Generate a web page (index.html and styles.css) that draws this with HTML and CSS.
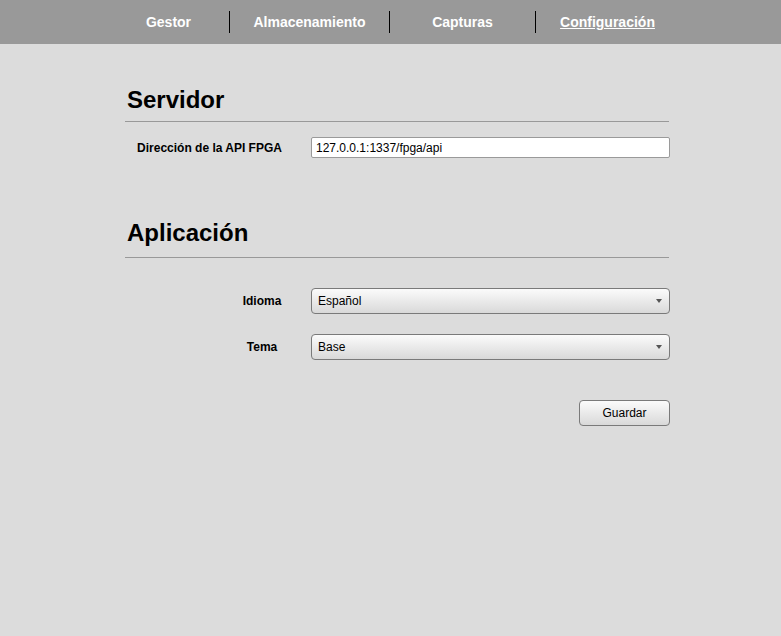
FILE: index.html
```html
<!DOCTYPE html>
<html lang="es">
<head>
<meta charset="utf-8">
<title>Configuración</title>
<link rel="stylesheet" href="styles.css">
</head>
<body>
<nav class="topbar">
  <ul class="menu">
    <li class="menu-item w1"><a href="#">Gestor</a></li>
    <li class="menu-item w2"><a href="#">Almacenamiento</a></li>
    <li class="menu-item w3"><a href="#">Capturas</a></li>
    <li class="menu-item w4 last"><a href="#" class="active">Configuración</a></li>
  </ul>
</nav>
<main class="content">
  <section class="section">
    <h2 class="section-title">Servidor</h2>
    <div class="row row-api">
      <label class="label label-api" for="api">Dirección de la API FPGA</label>
      <input id="api" class="text-input" type="text" value="127.0.0.1:1337/fpga/api">
    </div>
  </section>
  <section class="section section-app">
    <h2 class="section-title">Aplicación</h2>
    <div class="row row-first">
      <label class="label label-app" for="lang">Idioma</label>
      <div class="select-wrap">
        <select id="lang" class="select"><option>Español</option></select>
      </div>
    </div>
    <div class="row row-next">
      <label class="label label-app" for="theme">Tema</label>
      <div class="select-wrap">
        <select id="theme" class="select"><option>Base</option></select>
      </div>
    </div>
    <div class="actions">
      <button class="btn" type="button">Guardar</button>
    </div>
  </section>
</main>
</body>
</html>
```
FILE: styles.css
```css
html, body {
  margin: 0;
  padding: 0;
}
body {
  background: #dcdcdc;
  font-family: "Liberation Sans", Arial, sans-serif;
  color: #000;
  min-height: 636px;
}
.topbar {
  background: #999999;
  height: 44px;
}
.menu {
  list-style: none;
  margin: 0 0 0 108px;
  padding: 11px 0 0 0;
  display: flex;
}
.menu-item {
  height: 22px;
  border-right: 1px solid #000;
  display: flex;
  align-items: center;
  justify-content: center;
  font-size: 14px;
  font-weight: bold;
}
.menu-item.last { border-right: none; }
.w1 { width: 121px; }
.w2 { width: 159px; }
.w3 { width: 145px; }
.w4 { width: 143px; }
.menu-item a {
  color: #fff;
  text-decoration: none;
}
.menu-item a.active { text-decoration: underline; }
.content {
  margin-left: 125px;
  width: 545px;
  padding-top: 42px;
}
.section-title {
  margin: 0;
  padding: 0 0 7px 2px;
  font-size: 24px;
  font-weight: bold;
  line-height: 28px;
  border-bottom: 1px solid #999;
  width: 542px;
}
.section-app .section-title { margin-top: 61px; padding-bottom: 10px; }
.row {
  display: flex;
  align-items: center;
}
.row-api { margin-top: 15px; }
.row-first { margin-top: 30px; }
.row-next { margin-top: 20px; }
.label {
  font-size: 12px;
  font-weight: bold;
  text-align: center;
}
.label-api { width: 169px; margin-right: 17px; }
.label-app { width: 64px; margin-left: 105px; margin-right: 17px; }
.text-input {
  box-sizing: border-box;
  width: 359px;
  height: 21px;
  margin: 0;
  padding: 0 4px;
  border: 1px solid #9a9a9a;
  border-radius: 2px;
  background: #fff;
  font-family: "Liberation Sans", Arial, sans-serif;
  font-size: 12px;
  color: #000;
}
.select-wrap {
  position: relative;
  width: 359px;
  height: 26px;
}
.select {
  appearance: none;
  -webkit-appearance: none;
  box-sizing: border-box;
  width: 100%;
  height: 26px;
  margin: 0;
  padding: 0 20px 0 6px;
  border: 1px solid #7a7a7a;
  border-radius: 4px;
  background: linear-gradient(#fbfbfb, #d9d9d9);
  font-family: "Liberation Sans", Arial, sans-serif;
  font-size: 12px;
  color: #000;
}
.select-wrap::after {
  content: "";
  position: absolute;
  right: 8px;
  top: 11px;
  width: 0;
  height: 0;
  border-left: 3px solid transparent;
  border-right: 3px solid transparent;
  border-top: 4px solid #555;
  pointer-events: none;
}
.actions {
  display: flex;
  justify-content: flex-end;
  margin-top: 40px;
}
.btn {
  box-sizing: border-box;
  width: 91px;
  height: 26px;
  border: 1px solid #7a7a7a;
  border-radius: 4px;
  background: linear-gradient(#fbfbfb, #d9d9d9);
  font-family: "Liberation Sans", Arial, sans-serif;
  font-size: 12px;
  color: #000;
  padding: 0;
}
```
